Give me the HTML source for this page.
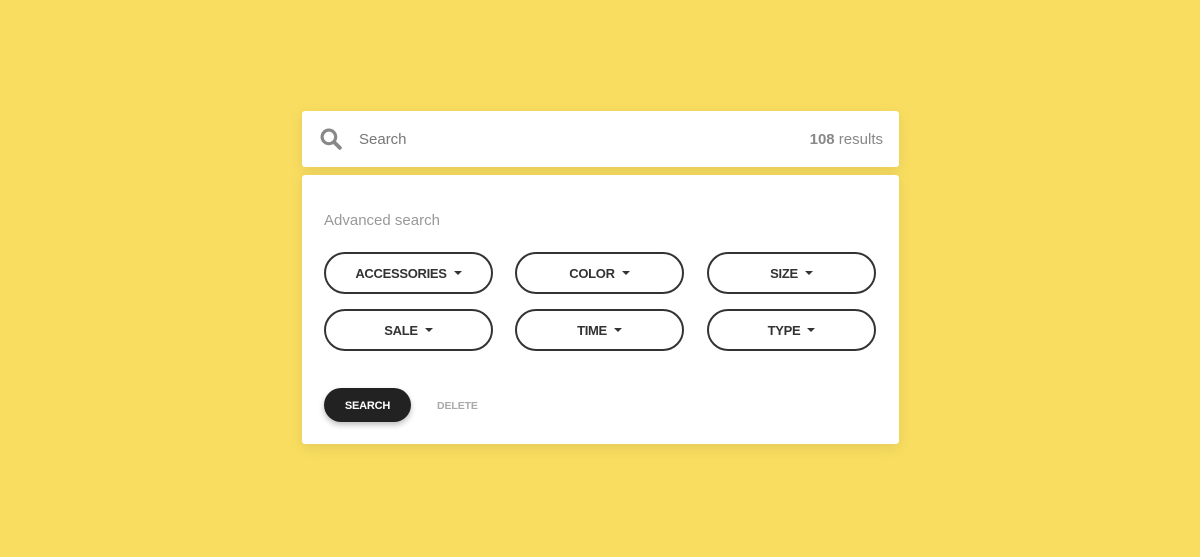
<!DOCTYPE html>
<html><head><style>
body{margin:0;width:1200px;height:557px;background:#f8dd60;font-family:"Liberation Sans",sans-serif;position:relative;overflow:hidden}
.card{position:absolute;left:302px;width:597px;background:#fff;border-radius:3px;box-shadow:0 4px 14px rgba(0,0,0,.08)}
.top{top:111px;height:56px}
.adv{top:175px;height:269px}
.pill{position:absolute;width:165px;height:38px;border:2px solid #333;border-radius:21px;display:flex;align-items:center;justify-content:center;font-size:13px;color:#333;font-weight:bold;letter-spacing:-.3px;padding-top:1px;box-sizing:content-box;height:37px}
.pill:after{content:"";border-left:4px solid transparent;border-right:4px solid transparent;border-top:4px solid #333;margin-left:7px;margin-top:-2px}
</style></head><body>
<div class="card top">
<svg style="position:absolute;left:18px;top:17px" width="23" height="23" viewBox="0 0 22 22"><circle cx="8.5" cy="8.5" r="6.5" fill="none" stroke="#888" stroke-width="3"/><path d="M13.5 13.5l5.5 5.5" stroke="#888" stroke-width="3.6" stroke-linecap="round"/></svg>
<div style="position:absolute;left:57px;top:20px;font-size:15px;color:#777">Search</div>
<div style="position:absolute;right:16px;top:20px;font-size:15px;color:#888"><b>108</b> results</div>
</div>
<div class="card adv">
<div style="position:absolute;left:22px;top:37px;font-size:15px;color:#999">Advanced search</div>
<div class="pill" style="left:22px;top:77px">ACCESSORIES</div>
<div class="pill" style="left:213px;top:77px">COLOR</div>
<div class="pill" style="left:405px;top:77px">SIZE</div>
<div class="pill" style="left:22px;top:134px">SALE</div>
<div class="pill" style="left:213px;top:134px">TIME</div>
<div class="pill" style="left:405px;top:134px">TYPE</div>
<div style="position:absolute;left:22px;top:213px;width:87px;height:34px;border-radius:17px;background:#222;color:#fff;font-size:11px;font-weight:bold;letter-spacing:-.2px;display:flex;align-items:center;justify-content:center;box-shadow:0 3px 6px rgba(0,0,0,.25);padding-top:1px;box-sizing:border-box">SEARCH</div>
<div style="position:absolute;left:135px;top:225px;font-size:10.5px;font-weight:bold;color:#aaa;letter-spacing:-.1px">DELETE</div>
</div>
</body></html>
